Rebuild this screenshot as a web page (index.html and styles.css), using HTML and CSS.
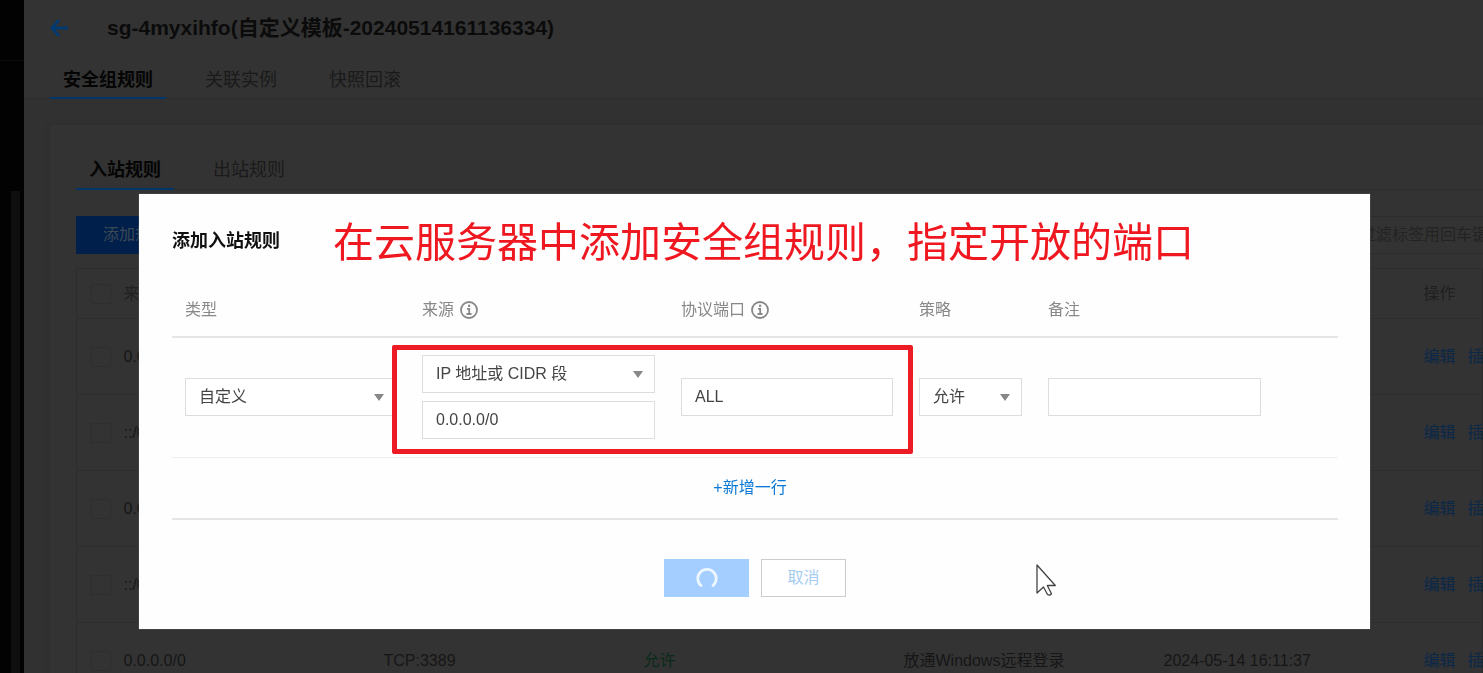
FILE: index.html
```html
<!DOCTYPE html>
<html lang="zh-CN">
<head>
<meta charset="utf-8">
<title>安全组规则</title>
<link rel="stylesheet" href="styles.css">
</head>
<body>
<div class="app">
  <aside class="rail"><div class="rail-top"></div><div class="rail-scroll"></div></aside>
  <main class="main">
    <header class="page-head">
      <button class="back" aria-label="返回">
        <svg width="18" height="18" viewBox="0 0 18 18" fill="none" stroke="currentColor" stroke-width="2.8"><path d="M9 1 2 9 9 17M2 9h16"/></svg>
      </button>
      <h1 class="page-title">sg-4myxihfo(自定义模板-20240514161136334)</h1>
    </header>
    <nav class="tabs tabs-page">
      <a class="tab tab-on" href="#rules">安全组规则</a>
      <a class="tab" href="#instances">关联实例</a>
      <a class="tab" href="#snapshots">快照回滚</a>
    </nav>
    <section class="panel">
      <nav class="tabs tabs-panel">
        <a class="tab tab-on" href="#in">入站规则</a>
        <a class="tab" href="#out">出站规则</a>
      </nav>
      <div class="toolbar">
        <button class="add">添加规则</button>
        <input class="search" type="text" aria-label="搜索" placeholder="过滤标签用回车键分隔">
      </div>
      <table class="rules">
        <colgroup><col class="c-check"><col class="c-data"><col class="c-data"><col class="c-data"><col class="c-data"><col class="c-data"><col></colgroup>
        <thead>
          <tr><th><input type="checkbox" class="check" aria-label="全选"></th><th>来源</th><th></th><th></th><th></th><th></th><th>操作</th></tr>
        </thead>
        <tbody>
          <tr><td><input type="checkbox" class="check" aria-label="选择第1行"></td><td>0.0.0.0/0</td><td></td><td></td><td></td><td></td><td class="ops"><a href="#e1">编辑</a><a href="#i1">插入</a></td></tr>
          <tr><td><input type="checkbox" class="check" aria-label="选择第2行"></td><td>::/0</td><td></td><td></td><td></td><td></td><td class="ops"><a href="#e2">编辑</a><a href="#i2">插入</a></td></tr>
          <tr><td><input type="checkbox" class="check" aria-label="选择第3行"></td><td>0.0.0.0/0</td><td></td><td></td><td></td><td></td><td class="ops"><a href="#e3">编辑</a><a href="#i3">插入</a></td></tr>
          <tr><td><input type="checkbox" class="check" aria-label="选择第4行"></td><td>::/0</td><td></td><td></td><td></td><td></td><td class="ops"><a href="#e4">编辑</a><a href="#i4">插入</a></td></tr>
          <tr><td><input type="checkbox" class="check" aria-label="选择第5行"></td><td>0.0.0.0/0</td><td>TCP:3389</td><td class="allow">允许</td><td>放通Windows远程登录</td><td>2024-05-14 16:11:37</td><td class="ops"><a href="#e5">编辑</a><a href="#i5">插入</a></td></tr>
        </tbody>
      </table>
    </section>
  </main>
</div>

<div class="overlay">
  <div class="dialog" role="dialog" aria-labelledby="dlg-title">
    <div class="dialog-head">
      <h2 class="dialog-title" id="dlg-title">添加入站规则</h2>
      <p class="note">在云服务器中添加安全组规则，指定开放的端口</p>
    </div>
    <table class="form">
      <colgroup><col class="f-type"><col class="f-source"><col class="f-port"><col class="f-policy"><col></colgroup>
      <thead>
        <tr>
          <th>类型</th>
          <th><span class="th-icon">来源 <svg class="info" viewBox="0 0 18 18" fill="none" stroke="currentColor" stroke-width="1.8"><circle cx="9" cy="9" r="8"/><path d="M7 7.800h2.200V13M6.500 13h5"/><path d="M8 4.800h2.200" stroke-width="2.200"/></svg></span></th>
          <th><span class="th-icon">协议端口 <svg class="info" viewBox="0 0 18 18" fill="none" stroke="currentColor" stroke-width="1.8"><circle cx="9" cy="9" r="8"/><path d="M7 7.800h2.200V13M6.500 13h5"/><path d="M8 4.800h2.200" stroke-width="2.200"/></svg></span></th>
          <th>策略</th>
          <th>备注</th>
        </tr>
      </thead>
      <tbody>
        <tr class="entry">
          <td><div class="pick"><select class="field" aria-label="类型"><option>自定义</option></select></div></td>
          <td>
            <div class="stack">
              <div class="pick"><select class="field" aria-label="来源类型"><option>IP 地址或 CIDR 段</option></select></div>
              <input class="field" type="text" aria-label="来源" value="0.0.0.0/0">
            </div>
          </td>
          <td><input class="field" type="text" aria-label="协议端口" value="ALL"></td>
          <td><div class="pick"><select class="field" aria-label="策略"><option>允许</option></select></div></td>
          <td><input class="field remark" type="text" aria-label="备注"></td>
        </tr>
        <tr class="more"><td colspan="5"><a href="#add">+新增一行</a></td></tr>
      </tbody>
    </table>
    <div class="actions">
      <button class="btn btn-ok" aria-label="确定">
        <svg width="22" height="22" viewBox="0 0 22 22" fill="none" stroke="currentColor" stroke-width="2.8" stroke-linecap="round"><path d="M5 18.500a9.200 9.200 0 1 1 12 0"/></svg>
      </button>
      <button class="btn">取消</button>
    </div>
    <div class="mark"></div>
    <svg class="cursor" width="21" height="33" viewBox="0 0 21 33" fill="#fff" stroke="#444" stroke-width="1.3" stroke-linejoin="round"><path d="M1 1v28l6.500-6 4 7.500q2 1.500 4-.8l-4.200-8.200h8z"/></svg>
  </div>
</div>
</body>
</html>
```

FILE: styles.css
```css
* { box-sizing: border-box; }

body {
  margin: 0;
  overflow: hidden;
  background: #313131;
  color: #161616;
  font: 16px/24px "Liberation Sans", "Noto Sans CJK SC", sans-serif;
}

h1, h2, p { margin: 0; }
a { text-decoration: none; color: inherit; }
button, input, select { font: inherit; color: inherit; }

.app { display: flex; height: 100vh; overflow: hidden; }

/* dimmed page */
.rail {
  flex: 0 0 24px;
  display: flex;
  flex-direction: column;
  background: #020202;
}
.rail-top { height: 61px; border-bottom: 1px solid #0c0c0c; }
.rail-scroll { flex: 1; width: 9px; margin: 130px 0 0 11px; background: #0f0f0f; }

.main { flex: 1; min-width: 0; }

.page-head {
  display: flex;
  align-items: center;
  gap: 39px;
  height: 56px;
  padding-left: 26px;
  background: #333;
}
.back {
  display: flex;
  padding: 0;
  border: 0;
  background: none;
  color: #003a70;
}
.page-title { font-size: 21px; line-height: 28px; color: #0b0b0b; }

.tabs { display: flex; gap: 26px; border-bottom: 1px solid #2d2d2d; }
.tab {
  padding: 0 13px;
  margin-bottom: -1px;
  border-bottom: 2px solid transparent;
  font-size: 18px;
  color: #1a1a1a;
}
.tab-on { border-color: #00366a; color: #050505; font-weight: bold; }
.tabs-page { padding-left: 26px; background: #333; }
.tabs-page .tab { height: 43px; line-height: 48px; }
.tabs-panel .tab { height: 39px; line-height: 38px; }

.panel {
  margin: 26px 0 0 26px;
  padding: 26px 0 0 26px;
  background: #333;
  box-shadow: 0 0 4px #2c2c2c;
}
.toolbar { display: flex; justify-content: space-between; margin: 26px 0 14px; }
.add {
  height: 38px;
  padding: 0 27px;
  border: 0;
  background: #001f4a;
  color: #3c4956;
}
.search {
  width: 140px;
  height: 38px;
  padding: 0 0 0 16px;
  border: 1px solid #2c2c2c;
  border-right: 0;
  background: none;
}
.search::placeholder { color: #232323; opacity: 1; }

.rules {
  width: 100%;
  table-layout: fixed;
  border-collapse: collapse;
  border: 1px solid #2d2d2d;
  white-space: nowrap;
}
.c-check { width: 47px; }
.c-data { width: 260px; }
.rules th, .rules td { padding: 0; text-align: left; border-bottom: 1px solid #2d2d2d; }
.rules th { height: 50px; font-weight: normal; color: #202020; }
.rules td { height: 76px; }
.rules .allow { color: #0a2a1a; }
.rules .ops { color: #0a2749; }
.ops a { margin-right: 12px; }
.check {
  display: block;
  width: 20px;
  height: 20px;
  margin: 0 0 0 14px;
  appearance: none;
  border: 1px solid #2e2e2e;
}

/* dialog */
.overlay { position: fixed; inset: 0; padding: 194px 113px 0 139px; }
.dialog {
  position: relative;
  padding: 24px 32px 32px 33px;
  background: #fefefe;
  box-shadow: 0 0 1px #888;
}
.dialog-head { display: flex; align-items: center; gap: 53px; height: 50px; }
.dialog-title { padding-bottom: 4px; font-size: 18px; line-height: 24px; color: #111; }
.note { font-size: 41px; line-height: 50px; color: #f01820; white-space: nowrap; }

.form {
  width: 100%;
  margin-top: 16px;
  table-layout: fixed;
  border-collapse: separate;
  border-spacing: 0;
  border-bottom: 2px solid #e5e5e5;
}
.f-type { width: 237px; }
.f-source { width: 259px; }
.f-port { width: 238px; }
.f-policy { width: 129px; }
.form th, .form td { padding: 0 13px; }
.form th {
  height: 54px;
  border-bottom: 2px solid #e5e5e5;
  text-align: left;
  font-weight: normal;
  color: #888;
}
.th-icon { display: flex; align-items: center; gap: 6px; }
.info { width: 18px; height: 18px; }
.form .entry td { height: 120px; padding-bottom: 2px; border-bottom: 1px solid #eee; }
.more td { height: 60px; padding-right: 23px; text-align: center; color: #0a78d6; }
.form .more td { padding-right: 23px; }

.stack { display: grid; gap: 8px; }
.pick { position: relative; }
.pick::after {
  content: "";
  position: absolute;
  top: 16px;
  right: 12px;
  border: 5px solid transparent;
  border-top: 7px solid #888;
  border-bottom: 0;
  pointer-events: none;
}
.field {
  display: block;
  width: 100%;
  height: 38px;
  padding: 0 13px;
  appearance: none;
  border: 1px solid #ddd;
  border-radius: 0;
  background: #fff;
  color: #444;
}
.remark { width: 213px; }

.actions { display: flex; justify-content: center; gap: 12px; margin-top: 39px; }
.btn {
  display: flex;
  align-items: center;
  justify-content: center;
  width: 85px;
  height: 38px;
  padding: 0;
  border: 1px solid #ccc;
  background: #fff;
  color: #a5cdf0;
}
.btn-ok { border: 0; background: #a3ceff; color: #eef6ff; }

/* annotation and pointer over the form */
.mark {
  position: absolute;
  top: 151px;
  left: 253px;
  width: 521px;
  height: 109px;
  border: 5px solid #ed1c24;
  border-radius: 2px;
}
.cursor { position: absolute; top: 370px; left: 897px; }
```
